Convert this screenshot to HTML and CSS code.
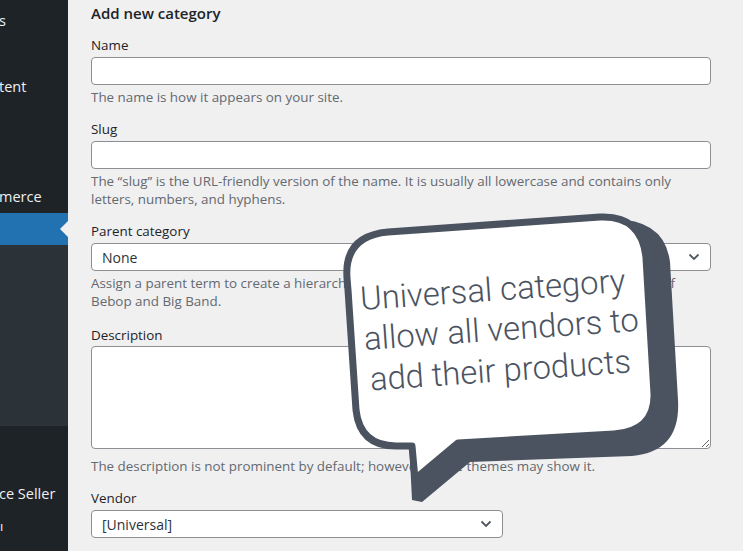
FILE: index.html
```html
<!DOCTYPE html>
<html>
<head>
<meta charset="utf-8">
<link rel="stylesheet" href="styles.css">
</head>
<body>
<div class="page">
  <nav class="sidebar">
    <div class="menu-item top-gap">s</div>
    <div class="menu-item"></div>
    <div class="menu-item">tent</div>
    <div class="menu-spacer"></div>
    <div class="menu-item">merce</div>
    <div class="menu-item active"><span class="active-arrow"></span></div>
    <div class="submenu"></div>
    <div class="menu-spacer2"></div>
    <div class="menu-item">ce Seller</div>
    <div class="menu-item small">ı</div>
  </nav>
  <main class="content">
    <h2 class="heading">Add new category</h2>
    <div class="field">
      <label class="label">Name</label>
      <div class="input"></div>
      <p class="desc">The name is how it appears on your site.</p>
    </div>
    <div class="field">
      <label class="label">Slug</label>
      <div class="input"></div>
      <p class="desc">The “slug” is the URL-friendly version of the name. It is usually all lowercase and contains only letters, numbers, and hyphens.</p>
    </div>
    <div class="field">
      <label class="label">Parent category</label>
      <div class="select">
        <span>None</span>
        <svg class="chev" width="12" height="8" viewBox="0 0 12 8"><path d="M1.5 1.5 L6 6 L10.5 1.5" fill="none" stroke="#50575e" stroke-width="1.8"/></svg>
      </div>
      <p class="desc">Assign a parent term to create a hierarchy. The term Jazz, for example, would be the parent of Bebop and Big Band.</p>
    </div>
    <div class="field field-desc">
      <label class="label">Description</label>
      <textarea class="textarea"></textarea>
      <p class="desc desc-ta">The description is not prominent by default; however, some themes may show it.</p>
    </div>
    <div class="field">
      <label class="label">Vendor</label>
      <div class="select select-short">
        <span>[Universal]</span>
        <svg class="chev" width="12" height="8" viewBox="0 0 12 8"><path d="M1.5 1.5 L6 6 L10.5 1.5" fill="none" stroke="#50575e" stroke-width="1.8"/></svg>
      </div>
    </div>
  </main>
</div>
<svg class="bubble" width="743" height="551" viewBox="0 0 743 551">
  <path d="M 600 220 Q 664 214 670 262 L 678 400 Q 681 452 632 456 L 470 462 L 422 502 L 412 500 L 409 440 L 500 330 Z" fill="#4b5361"/>
  <path d="M 348 290 L 356 410 Q 360 446 396 446 L 412 446 L 415 479 L 458 443 L 614 434 Q 655 431 654 394 L 646 258 Q 642 215 600 217 L 388 232 Q 344 236 347 278 Z" fill="#ffffff" stroke="#4b5361" stroke-width="7" stroke-linejoin="round"/>
  <text class="bubble-text" transform="rotate(-4 362 310)">
    <tspan x="361" y="310">Universal category</tspan>
    <tspan x="362" y="350">allow all vendors to</tspan>
    <tspan x="365" y="391">add their products</tspan>
  </text>
</svg>
</body>
</html>
```

FILE: styles.css
```css
html, body {
  margin: 0;
  padding: 0;
}
body {
  width: 743px;
  height: 551px;
  overflow: hidden;
  background: #f0f0f1;
  font-family: "Open Sans", "Noto Sans", sans-serif;
  position: relative;
}
.page {
  display: flex;
  height: 551px;
}
.sidebar {
  width: 68px;
  flex: none;
  background: #1d2327;
  display: flex;
  flex-direction: column;
  color: #f0f0f1;
  font-size: 14.5px;
  overflow: hidden;
}
.menu-item {
  height: 33px;
  line-height: 33px;
  white-space: nowrap;
  margin-left: -1px;
  position: relative;
}
.top-gap {
  margin-top: 4px;
}
.menu-spacer {
  height: 77px;
}
.menu-item.active {
  height: 32px;
  margin-left: 0;
  background: #2271b1;
  margin-top: -0.5px;
}
.active-arrow {
  position: absolute;
  right: 0;
  top: 8px;
  width: 0;
  height: 0;
  border-top: 8px solid transparent;
  border-bottom: 8px solid transparent;
  border-right: 8px solid #f0f0f1;
}
.submenu {
  height: 181px;
  background: #2c3338;
}
.menu-spacer2 {
  height: 51px;
}
.menu-item.small {
  margin-left: 0;
  font-size: 13px;
}
.content {
  flex: 1;
  padding: 4px 32px 0 23px;
  color: #1d2327;
  font-size: 13.4px;
}
.heading {
  margin: 0;
  font-size: 15px;
  font-weight: 600;
  line-height: 18px;
  color: #1d2327;
}
.field {
  margin-top: 14px;
  display: flex;
  flex-direction: column;
}
.field-desc {
  margin-top: 16px;
}
.label {
  line-height: 18px;
  color: #1d2327;
}
.input, .select, .textarea {
  box-sizing: border-box;
  background: #fff;
  border: 1px solid #8c8f94;
  border-radius: 4px;
  margin-top: 3px;
}
.input {
  height: 28px;
}
.select {
  height: 28px;
  display: flex;
  align-items: center;
  justify-content: space-between;
  padding: 0 10px 0 10px;
  font-size: 14px;
  color: #2c3338;
}
.select-short {
  width: 412px;
}
.chev {
  display: block;
}
.textarea {
  display: block;
  height: 103px;
  resize: vertical;
  font-family: inherit;
  margin-top: 2px;
}
.desc {
  margin: 3px 0 0;
  line-height: 18px;
  color: #646970;
}
.desc-ta {
  margin-top: 8px;
}
.bubble {
  position: absolute;
  left: 0;
  top: 0;
  pointer-events: none;
}
.bubble-text {
  font-family: Roboto, "Liberation Sans", sans-serif;
  font-size: 32.8px;
  font-weight: 300;
  fill: #4b5361;
}
```
